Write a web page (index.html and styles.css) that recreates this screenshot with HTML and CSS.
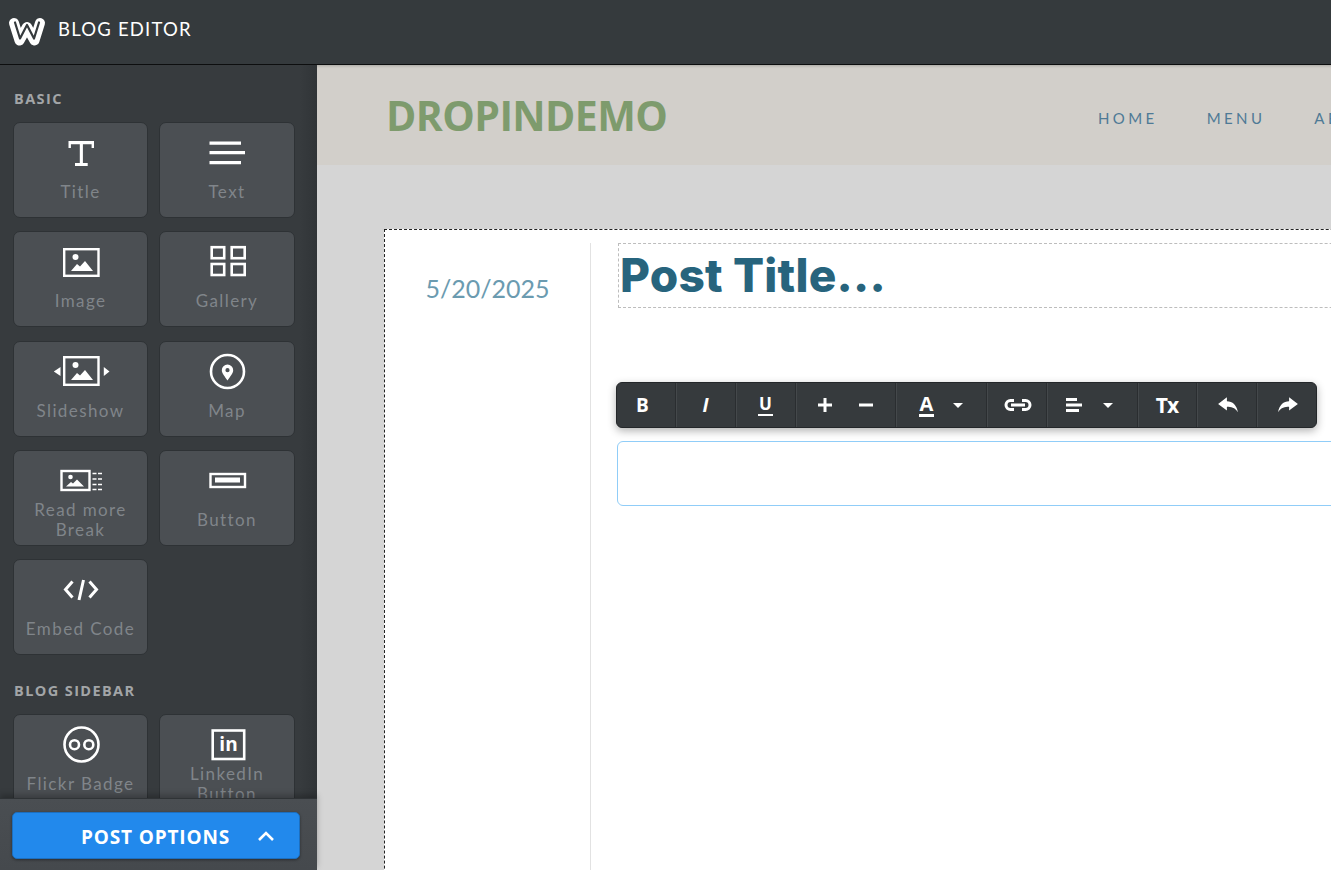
FILE: index.html
```html
<!DOCTYPE html>
<html lang="en">
<head>
<meta charset="utf-8">
<title>Blog Editor</title>
<link rel="stylesheet" href="styles.css">
</head>
<body>
<header class="topbar">
  <svg class="logo" viewBox="0 0 36 28"><path class="logo-o" d="M5 5 L10.500 22.500 L18 9 L25.500 22.500 L31 5"/><path class="logo-i" d="M6 4.500 L11 20.500 L18 7 L25 20.500 L30 4.500"/></svg>
  <span class="topbar-title">BLOG EDITOR</span>
</header>
<div class="workspace">
  <aside class="sidebar">
    <div class="palette">
      <h2 class="section-title">BASIC</h2>
      <div class="cards">
        <div class="card"><svg class="ico" viewBox="0 0 36 36"><path class="fill" d="M5.500 7h25.500v7h-2.400v-3.800H19.900v18.800h4.800V32H12v-2.900h4.800V10.200H7.900v3.800H5.500z"/></svg><span class="label">Title</span></div>
        <div class="card"><svg class="ico" viewBox="0 0 36 36"><path class="fill" d="M.5 7.500H32v3.200H.5zM.5 17H36v3.200H.5zM.5 27H32v3.200H.5z"/></svg><span class="label">Text</span></div>
        <div class="card"><svg class="ico" viewBox="0 0 36 36"><rect class="line" x="1.200" y="6.200" width="34.300" height="26.600"/><circle class="fill" cx="12.500" cy="14" r="3"/><path class="fill" d="M8 28l6-7 3 2.500 5-5.500 8 10z"/></svg><span class="label">Image</span></div>
        <div class="card"><svg class="ico" viewBox="0 0 36 36"><g class="line thick"><rect x="2.700" y="4.200" width="12.500" height="11"/><rect x="22.700" y="4.200" width="13" height="11"/><rect x="2.700" y="21" width="12.500" height="11"/><rect x="22.700" y="21" width="13" height="11"/></g></svg><span class="label">Gallery</span></div>
        <div class="card"><svg class="ico" viewBox="0 0 36 36"><rect class="line" x="1.200" y="4.200" width="34.300" height="27.600"/><circle class="fill" cx="12.500" cy="12" r="3"/><path class="fill" d="M8 27l6-7 3 2.500 5-5.500 8 10z"/><path class="fill" d="M-2.500 14v9l-6.700-4.500zM40.800 14v9l5.700-4.500z"/></svg><span class="label">Slideshow</span></div>
        <div class="card"><svg class="ico" viewBox="0 0 36 36"><circle class="line thick" cx="18.500" cy="18.500" r="16.500"/><path class="fill" fill-rule="evenodd" d="M18.500 11.500a5.700 5.700 0 0 1 5.700 5.700c0 3.600-3.500 6.600-5.700 10.300-2.200-3.700-5.700-6.700-5.700-10.300a5.700 5.700 0 0 1 5.700-5.700zm0 3.600a2.100 2.100 0 1 0 0 4.200 2.100 2.100 0 0 0 0-4.200z"/></svg><span class="label">Map</span></div>
        <div class="card tall"><svg class="ico" viewBox="0 0 36 36"><rect class="line" x="-1.500" y="9" width="28" height="19"/><circle class="fill" cx="7.500" cy="15" r="2.300"/><path class="fill" d="M3 24.500l5-4.500 2 1.500 4-4 7 7z"/><path class="line dash" d="M29.500 11.500h11M29.500 17h11M29.500 22.500h11M29.500 27.500h11"/></svg><span class="label">Read more Break</span></div>
        <div class="card"><svg class="ico" viewBox="0 0 36 36"><rect class="line" x="1.500" y="12" width="34.500" height="13"/><rect class="fill" x="6" y="15.500" width="25" height="5"/></svg><span class="label">Button</span></div>
        <div class="card"><svg class="ico" viewBox="0 0 36 36"><path class="line code" d="M9.500 10.500L2.500 18.500l7 8M26.500 10.500l7 8-7 8M20.500 9l-4.500 20"/></svg><span class="label">Embed Code</span></div>
      </div>
      <h2 class="section-title second">BLOG SIDEBAR</h2>
      <div class="cards">
        <div class="card"><svg class="ico" viewBox="0 0 36 36"><circle class="line thick" cx="18.500" cy="18.500" r="17"/><circle class="line thick" cx="11.500" cy="18.700" r="4.500"/><circle class="line thick" cx="25.800" cy="18.700" r="4.500"/></svg><span class="label">Flickr Badge</span></div>
        <div class="card tall"><svg class="ico" viewBox="0 0 36 36"><rect class="line thick" x="3.700" y="4.500" width="31.500" height="28.500"/><text class="in" x="19.500" y="25">in</text></svg><span class="label">LinkedIn Button</span></div>
      </div>
    </div>
    <div class="sidebar-foot">
      <button class="options" type="button"><span>POST OPTIONS</span><svg class="chev" viewBox="0 0 18 12"><path d="M2 10l7-7 7 7"/></svg></button>
    </div>
  </aside>
  <main class="stage">
    <div class="site-head">
      <div class="site-logo">DROPINDEMO</div>
      <nav class="site-nav"><span>HOME</span><span>MENU</span><span>ABOUT</span></nav>
    </div>
    <section class="post">
      <div class="post-date">5/20/2025</div>
      <div class="post-body">
        <div class="post-title">Post Title...</div>
        <div class="toolbar">
          <div class="tb w59 off4"><b class="g b">B</b></div>
          <div class="tb w60"><b class="g it">I</b></div>
          <div class="tb w60"><b class="g ul">U</b></div>
          <div class="tb w100 gap25"><svg class="t" viewBox="0 0 16 16"><path d="M1 8h14M8 1v14"/></svg><svg class="t" viewBox="0 0 16 16"><path d="M1 8h14"/></svg></div>
          <div class="tb w91 gap19"><b class="g a">A</b><i class="caret"></i></div>
          <div class="tb w60"><svg class="t link" viewBox="0 0 30 16"><path d="M11 3.500H7.500a4.500 4.500 0 0 0 0 9H11M19 3.500h3.500a4.500 4.500 0 0 1 0 9H19M8 8h14"/></svg></div>
          <div class="tb w91 gap20 off3"><svg class="t al" viewBox="0 0 18 16"><path d="M1 2.500h11M1 8h16M1 13.500h13"/></svg><i class="caret"></i></div>
          <div class="tb w59"><b class="g tx">Tx</b></div>
          <div class="tb w60 off-r"><svg class="t arrow" viewBox="0 0 20 16"><path d="M9 1L1 7l8 6V9.500c4 0 7 .5 10 5C18 8 14 4.500 9 4.500z"/></svg></div>
          <div class="tb w59 off-r"><svg class="t arrow" viewBox="0 0 20 16"><path d="M11 1l8 6-8 6V9.500c-4 0-7 .5-10 5C2 8 6 4.500 11 4.500z"/></svg></div>
        </div>
        <div class="editor"></div>
      </div>
    </section>
  </main>
</div>
</body>
</html>
```
FILE: styles.css
```css
* { box-sizing: border-box; }
html, body { margin: 0; height: 100%; overflow: hidden; }
body { width: 1331px; height: 870px; display: flex; flex-direction: column; font-family: "Lato", "Open Sans", sans-serif; background: #d5d5d5; }

.topbar { height: 65px; flex: none; background: #353a3d; border-bottom: 1px solid #0d0e0f; display: flex; align-items: center; padding: 0 0 6px 9px; }
.logo { width: 36px; height: 28px; margin-top: 5px; overflow: visible; }
.logo-o { fill: none; stroke: #fff; stroke-width: 10; stroke-linejoin: round; stroke-linecap: round; }
.logo-i { fill: none; stroke: #353a3d; stroke-width: 2.200; stroke-linejoin: round; stroke-linecap: round; }
.topbar-title { margin-left: 13px; font-family: "Lato", sans-serif; font-size: 18.500px; color: #fff; letter-spacing: 1.200px; }

.workspace { flex: 1; display: flex; min-height: 0; }
.sidebar { width: 317px; flex: none; display: flex; flex-direction: column; background: linear-gradient(90deg, #373b3e 0, #373b3e 300px, #303437 317px); }
.palette { flex: 1; min-height: 0; overflow: hidden; padding: 26px 0 0 13px; }
.section-title { margin: 0 0 15px 1px; font-size: 14.500px; line-height: 16px; font-weight: 700; letter-spacing: 1.400px; color: #a2a5a7; font-family: "Open Sans", sans-serif; }
.section-title.second { margin-top: 28px; }
.cards { display: grid; grid-template-columns: 135px 136px; column-gap: 11px; row-gap: 13.250px; }
.card { height: 96px; background: #4b4f53; border: 1px solid #2e3235; border-radius: 7px; padding-top: 11px; display: flex; flex-direction: column; align-items: center; text-align: center; }
.ico { width: 36px; height: 36px; flex: none; overflow: visible; }
.fill { fill: #fff; }
.line { fill: none; stroke: #fff; stroke-width: 2.400; }
.thick { stroke-width: 2.600; }
.dash { stroke-dasharray: 4 1.500; stroke-width: 1.400; }
.code { stroke-width: 3; }
.in { fill: #fff; font: 700 19px "Open Sans", sans-serif; text-anchor: middle; }
.label { margin-top: 12px; font-size: 17px; line-height: 20px; letter-spacing: 1.400px; color: #80858a; }
.tall .label { margin-top: 2px; padding: 0 14px; }

.sidebar-foot { height: 72px; flex: none; position: relative; background: linear-gradient(180deg, #4a4e52, #45494d); border-top: 1px solid #2f3336; box-shadow: 0 -3px 6px rgba(0,0,0,.25); padding: 13px 17px 0 12px; }
.options { width: 288px; height: 47px; border: 1px solid #1c6fc0; border-radius: 5px; background: #2289ec; color: #fff; font: 700 19px "Open Sans", sans-serif; letter-spacing: .85px; display: flex; align-items: center; padding: 2px 24px 0 68px; justify-content: space-between; box-shadow: 0 1px 3px rgba(0,0,0,.4); }
.chev { width: 18px; height: 12px; fill: none; stroke: #fff; stroke-width: 2.600; margin-top: -2px; }

.stage { flex: 1; min-width: 0; overflow: hidden; background: #d5d5d5; }
.site-head { height: 100px; background: #d2cfca; display: flex; align-items: center; padding-left: 69px; box-shadow: inset 0 3px 3px -2px rgba(0,0,0,.2); }
.site-logo { width: 712px; flex: none; font: 700 41px "Open Sans", sans-serif; color: #7e9b6d; letter-spacing: -.6px; }
.site-nav { display: flex; gap: 49px; padding-top: 6px; font: 400 15px "Lato", sans-serif; letter-spacing: 3.400px; color: #4e7a96; white-space: nowrap; }

.post { width: 1100px; height: 800px; margin: 64px 0 0 67px; background: #fff; border: 1px dashed #222; padding: 13px 0 0 0; display: flex; }
.post-date { width: 206px; flex: none; border-right: 1px solid #e2e2e2; padding: 29px 0 0 0; text-align: center; font: 400 25px/32px "Lato", sans-serif; color: #6b9bb0; }
.post-body { padding-left: 27px; flex: 1; }
.post-title { height: 65px; border: 1px dashed #bdbdbd; padding: 0 0 0 1px; font: 800 46px/62px "Inter", sans-serif; letter-spacing: .2px; color: #27647d; }
.toolbar { width: 701px; height: 46px; margin: 74px 0 13px -2px; background: #363a3d; border: 1px solid #24272a; border-radius: 6px; display: flex; box-shadow: 0 3px 8px rgba(0,0,0,.3); overflow: hidden; }
.tb { height: 100%; display: flex; align-items: center; justify-content: center; border-right: 1px solid #2a2d30; box-shadow: 1px 0 0 #44484b; }
.tb:last-child { border-right: 0; box-shadow: none; }
.w59 { width: 59px; } .w60 { width: 60px; } .w91 { width: 91px; } .w100 { width: 100px; }
.gap25 { gap: 25px; } .gap19 { gap: 19px; } .gap20 { gap: 20px; }
.off4 { padding-right: 7px; } .off3 { padding-right: 6px; } .off-r { padding-left: 3px; }
.g { color: #fff; font: 700 18px/22px "Open Sans", sans-serif; }
.b { font-size: 19px; }
.it { font-style: italic; font-size: 19px; }
.ul { font-size: 17px; line-height: 20px; border-bottom: 2px solid #fff; padding: 0 1px; }
.a { border-bottom: 3px solid #fff; font-size: 20px; line-height: 20px; padding: 0 1px; }
.tx { font-size: 21px; letter-spacing: -1px; }
.t { width: 16px; height: 16px; fill: none; stroke: #fff; stroke-width: 3; flex: none; }
.link { width: 30px; margin-left: 2px; }
.al { width: 18px; }
.arrow { width: 22px; height: 18px; fill: #fff; stroke: none; }
.caret { width: 0; height: 0; border-left: 5px solid transparent; border-right: 5px solid transparent; border-top: 5px solid #fff; }
.editor { height: 65px; margin-left: -1px; background: #fff; border: 1px solid #90cdf8; border-radius: 6px; }
```
